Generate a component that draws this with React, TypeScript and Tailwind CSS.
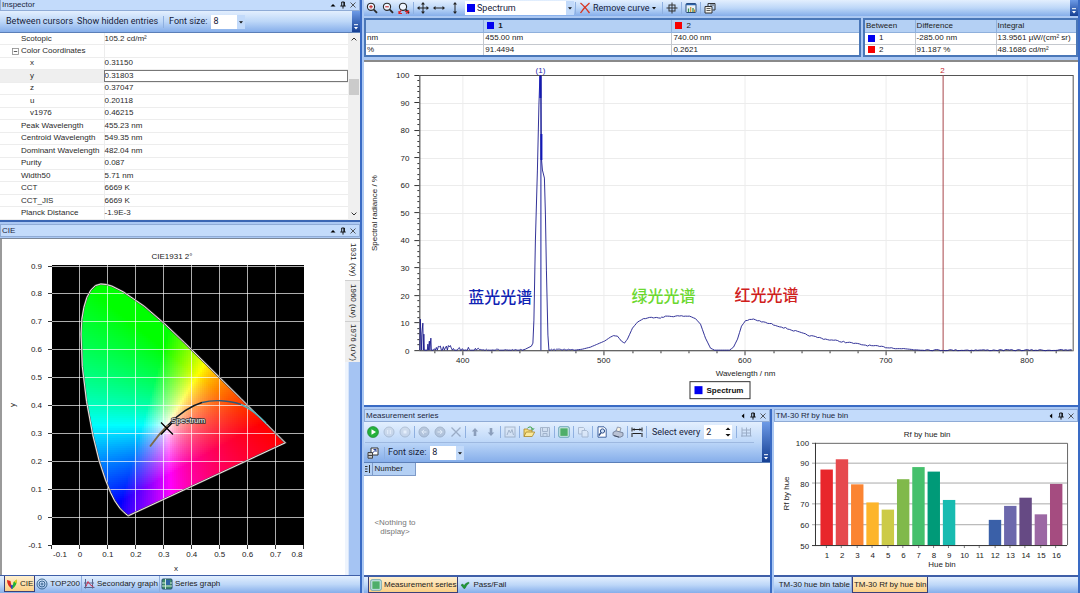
import React from 'react';
import type { ReactNode } from 'react';

/* ---------- shared pieces ---------- */

const TOOLBAR = 'bg-linear-to-b from-[#e3effe] via-[#bdd7f8] to-[#86aeea]';
const UI_TEXT = '[font-family:Roboto,sans-serif]';

function Sep() {
  return <span className="mx-px h-3 w-px shrink-0 bg-[#8fb0e0]" />;
}

function Overflow() {
  return (
    <button
      type="button"
      aria-label="Toolbar options"
      className="flex w-2 shrink-0 items-end justify-center self-stretch bg-linear-to-b from-[#6d9ae6] to-[#153f93] pb-0.5"
    >
      <svg viewBox="0 0 6 6" className="size-1.5">
        <path d="M1 .7h4" stroke="#fff" />
        <path d="M1 3h4L3 5.4z" fill="#fff" />
      </svg>
    </button>
  );
}

function PanelTitle({ title, arrow }: { title: string; arrow: 'up' | 'left' }) {
  return (
    <header className="flex h-[13px] shrink-0 items-center border border-[#8fabd6] bg-[#c3dbfb] pr-0.5 pl-px text-[8px] leading-none text-[#1c2740]">
      <h2 className="flex-1">{title}</h2>
      <div className="flex items-center gap-0.5">
        <button type="button" aria-label="Panel menu" className="size-2">
          <svg viewBox="0 0 8 8" className="size-2">
            {arrow === 'up' ? <path d="M1.5 5.6h5L4 3z" fill="#000" /> : <path d="M5.2 1.5v5L2.6 4z" fill="#000" />}
          </svg>
        </button>
        <button type="button" aria-label="Pin panel" className="size-2">
          <svg viewBox="0 0 8 8" className="size-2" fill="none" stroke="#000">
            <path d="M2.7 4.8V1h2.6v3.8M1.3 5h5.4M4 5v2.6" strokeWidth=".9" />
            <path d="M5 1v4" />
          </svg>
        </button>
        <button type="button" aria-label="Close panel" className="size-2">
          <svg viewBox="0 0 8 8" className="size-2" stroke="#333" strokeWidth=".8">
            <path d="M1.5 1.5l5 5M6.5 1.5l-5 5" />
          </svg>
        </button>
      </div>
    </header>
  );
}

function ComboArrow() {
  return (
    <span className="pointer-events-none flex w-2 shrink-0 items-center justify-center self-stretch bg-[#c2dafa]">
      <svg viewBox="0 0 6 6" className="size-1.5">
        <path d="M1 2.2h4L3 4.6z" fill="#111" />
      </svg>
    </span>
  );
}

function FontSize({ id }: { id: string }) {
  return (
    <div className="flex items-center gap-1">
      <label htmlFor={id}>Font size:</label>
      <div className="flex h-3.5 w-[34px] items-stretch bg-white">
        <select id={id} defaultValue="8" className="min-w-0 flex-1 appearance-none bg-white pl-0.5 outline-none">
          <option>8</option>
          <option>10</option>
        </select>
        <ComboArrow />
      </div>
    </div>
  );
}

function Tool({ label, children, disabled }: { label: string; children: ReactNode; disabled?: boolean }) {
  return (
    <button
      type="button"
      aria-label={label}
      disabled={disabled}
      className="flex h-4 w-4 shrink-0 items-center justify-center disabled:opacity-45"
    >
      <svg viewBox="0 0 12 12" className="size-3" fill="none">
        {children}
      </svg>
    </button>
  );
}

function Tab({ active, icon, children }: { active?: boolean; icon?: ReactNode; children: ReactNode }) {
  return (
    <button
      type="button"
      className={
        active
          ? 'flex h-4 items-center gap-0.5 border border-t-0 border-[#3b3f78] bg-linear-to-b from-[#fff0cf] to-[#fbcf85] px-px'
          : 'flex h-4 items-center gap-0.5 border-r border-[#8faede] px-px last:border-r-0'
      }
    >
      {icon && (
        <svg viewBox="0 0 12 12" className="size-3" fill="none">
          {icon}
        </svg>
      )}
      {children}
    </button>
  );
}

const GreenBox = (
  <>
    <rect x=".8" y=".8" width="10.4" height="10.4" rx="1.2" fill="#dff3ee" stroke="#5f9fb0" />
    <rect x="2.3" y="2.3" width="7.4" height="7.6" fill="#4fae6a" />
  </>
);

/* ---------- inspector ---------- */

const ROWS: [string, string, number][] = [
  ['Scotopic', '105.2 cd/m²', 0],
  ['Color Coordinates', '', 0],
  ['x', '0.31150', 1],
  ['y', '0.31803', 1],
  ['z', '0.37047', 1],
  ['u', '0.20118', 1],
  ['v1976', '0.46215', 1],
  ['Peak Wavelength', '455.23 nm', 0],
  ['Centroid Wavelength', '549.35 nm', 0],
  ['Dominant Wavelength', '482.04 nm', 0],
  ['Purity', '0.087', 0],
  ['Width50', '5.71 nm', 0],
  ['CCT', '6669 K', 0],
  ['CCT_JIS', '6669 K', 0],
  ['Planck Distance', '-1.9E-3', 0],
];

function Inspector() {
  return (
    <section className="flex flex-col border-b-2 border-[#3a66b4]">
      <PanelTitle title="Inspector" arrow="up" />
      <div className={`flex h-[21px] items-center ${TOOLBAR} ${UI_TEXT} text-[9px] leading-none text-[#16213a]`}>
        <div className="flex flex-1 items-center gap-1 pl-1.5">
          <button type="button">Between cursors</button>
          <button type="button">Show hidden entries</button>
          <Sep />
          <FontSize id="inspector-size" />
        </div>
        <Overflow />
      </div>
      <div className="flex border-t border-[#5b7fb8] bg-white">
        <table className="h-[187px] flex-1 border-collapse text-[8px] leading-none text-[#2a2a2a]">
          <tbody>
            {ROWS.map(([name, value, level]) => (
              <tr key={name} className="border-b border-[#ededed]">
                <th
                  scope="row"
                  className={
                    'w-[104px] border-r border-[#ededed] py-0 text-left font-normal whitespace-nowrap ' +
                    (name === 'y' ? 'bg-[#efefef] ' : '') +
                    (level ? 'pl-[30px]' : name === 'Color Coordinates' ? 'pl-3' : 'pl-[21px]')
                  }
                >
                  {name === 'Color Coordinates' ? (
                    <span className="flex items-center gap-0.5">
                      <svg viewBox="0 0 7 7" className="size-[7px]" fill="none">
                        <rect x=".5" y=".5" width="6" height="6" fill="#fff" stroke="#8a8a8a" strokeWidth=".8" />
                        <path d="M1.8 3.5h3.4" stroke="#333" strokeWidth=".8" />
                      </svg>
                      {name}
                    </span>
                  ) : (
                    name
                  )}
                </th>
                <td className={name === 'y' ? 'py-0 pl-0 outline-1 -outline-offset-1 outline-[#777]' : 'py-0 pl-0'}>
                  {value}
                </td>
              </tr>
            ))}
          </tbody>
        </table>
        <div className="flex w-[12px] flex-col items-center justify-between bg-[#f0f0f0] py-1">
          <svg viewBox="0 0 6 4" className="h-1 w-1.5" fill="none" stroke="#333">
            <path d="M.6 3.4L3 1l2.4 2.4" />
          </svg>
          <div className="mb-20 h-4 w-[10px] bg-[#cbcbcb]" />
          <svg viewBox="0 0 6 4" className="h-1 w-1.5" fill="none" stroke="#333">
            <path d="M.6 .6L3 3 5.4.6" />
          </svg>
        </div>
      </div>
    </section>
  );
}

/* ---------- CIE 1931 diagram ---------- */

const LOCUS: [number, number][] = [
  [0.1741, 0.005], [0.1733, 0.0048], [0.1714, 0.0051], [0.1689, 0.0069], [0.1644, 0.0109],
  [0.1566, 0.0177], [0.144, 0.0297], [0.1241, 0.0578], [0.1096, 0.0868], [0.0913, 0.1327],
  [0.0687, 0.2007], [0.0454, 0.295], [0.0235, 0.4127], [0.0082, 0.5384], [0.0039, 0.6548],
  [0.0065, 0.707], [0.0139, 0.7502], [0.0247, 0.786], [0.0389, 0.812], [0.055, 0.828],
  [0.0743, 0.8338], [0.094, 0.832], [0.1142, 0.8262], [0.1547, 0.8059], [0.2296, 0.7543],
  [0.3016, 0.6923], [0.3731, 0.6245], [0.4441, 0.5547], [0.5125, 0.4866], [0.5752, 0.4242],
  [0.627, 0.3725], [0.6658, 0.334], [0.6915, 0.3083], [0.719, 0.2809], [0.7347, 0.2653],
];

const cx = (x: number) => 80 + x * 279.5;
const cy = (y: number) => 517 - y * 279.5;

function xyToCss(x: number, y: number): string {
  const X = x / y;
  const Z = (1 - x - y) / y;
  const lin = [
    3.2406 * X - 1.5372 - 0.4986 * Z,
    -0.9689 * X + 1.8758 + 0.0415 * Z,
    0.0557 * X - 0.204 + 1.057 * Z,
  ].map((v) => Math.max(0, v));
  const top = Math.max(...lin);
  return `rgb(${lin.map((v) => Math.round(255 * Math.pow(v / top, 0.8))).join(',')})`;
}

function gamutCells() {
  const cells: { x: number; y: number; c: string }[] = [];
  for (let py = 282; py < 518; py += 2) {
    for (let px = 78; px < 288; px += 2) {
      const x = (px + 1 - 80) / 279.5;
      const y = Math.max(0.004, (517 - py - 1) / 279.5);
      if (x + y > 1.02 || y < (x - 0.2) * 0.44 - 0.02) continue;
      cells.push({ x: px, y: py, c: xyToCss(Math.max(x, 0.001), y) });
    }
  }
  return cells;
}

const CELLS = gamutCells();
const LOCUS_POINTS = LOCUS.map(([x, y]) => `${cx(x).toFixed(1)},${cy(y).toFixed(1)}`).join(' ');

function CieChart() {
  const xs = [0, 1, 2, 3, 4, 5, 6, 7, 8, 9];
  const ys = [0, 1, 2, 3, 4, 5, 6, 7, 8, 9, 10];
  return (
    <svg viewBox="2 239 343 336" className="h-full w-full" role="img" aria-label="CIE1931 2° diagram">
      <defs>
        <clipPath id="gamut">
          <polygon points={LOCUS_POINTS} />
        </clipPath>
      </defs>
      <rect x="52" y="265" width="252" height="280" fill="#000" />
      <g clipPath="url(#gamut)" shapeRendering="crispEdges">
        {CELLS.map((c) => (
          <rect key={`${c.x}-${c.y}`} x={c.x} y={c.y} width="2" height="2" fill={c.c} />
        ))}
      </g>
      <g stroke="#fff" strokeOpacity=".68">
        {xs.slice(1, 9).map((i) => (
          <path key={i} d={`M${Math.round(52 + i * 27.95) - 0.5} 265V545`} />
        ))}
        {ys.slice(1, 11).map((i) => (
          <path key={i} d={`M52 ${Math.round(545 - i * 27.95) + 0.5}H304`} />
        ))}
      </g>
      <polygon points={LOCUS_POINTS} fill="none" stroke="#555" strokeWidth="1.8" />
      <polygon points={LOCUS_POINTS} fill="none" stroke="#f1e8e4" strokeWidth="1" />
      <g stroke="#333">
        {xs.map((i) => (
          <path key={i} d={`M${Math.round(52 + i * 27.95) - 0.5} 545v4`} />
        ))}
        {ys.map((i) => (
          <path key={i} d={`M48 ${Math.round(545 - i * 27.95) + 0.5}h4`} />
        ))}
      </g>
      <g fill="none" strokeWidth="1.4">
        <path d="M150 446.500C156 438 161 432 168 425" stroke="#7c6a4a" strokeWidth="1.800" />
        <path d="M168 425C178 415 190 406 202 402.500" stroke="#101820" />
        <path d="M202 402.500C213 399.500 229 400 241 404.500" stroke="#2f5a78" />
        <path d="M241 404.500C251 408.500 259 416 266 423" stroke="#57b4bd" />
      </g>
      <path d="M161 422.500l12 12M172.500 422.500L161 434.500" stroke="#000" strokeWidth="1.300" />
      <g fontSize="8" fill="#222">
        <text x="171" y="423" fill="#fff" stroke="#333" strokeWidth="1.600" paintOrder="stroke">
          Spectrum
        </text>
        <text x="172" y="259" textAnchor="middle">CIE1931 2°</text>
        {ys.map((i) => (
          <text key={i} x="42" y={548 - i * 27.95} textAnchor="end">
            {i === 1 ? '0' : ((i - 1) / 10).toFixed(1)}
          </text>
        ))}
        {xs.map((i) => (
          <text key={i} x={i === 0 ? 60 : i === 9 ? 297 : 52 + i * 27.95} y="557" textAnchor="middle">
            {i === 1 ? '0' : ((i - 1) / 10).toFixed(1)}
          </text>
        ))}
        <text x="176" y="571" textAnchor="middle">x</text>
        <text transform="translate(15 405) rotate(-90)" textAnchor="middle">y</text>
      </g>
    </svg>
  );
}

function CiePanel() {
  const side = ['1931 (xy)', '1960 (uv)', "1976 (u'v')"];
  return (
    <section className="mt-0.5 flex min-h-0 flex-1 flex-col">
      <PanelTitle title="CIE" arrow="up" />
      <div className="mt-px flex min-h-0 flex-1 border-t border-[#7b8798]">
        <div className="min-h-0 min-w-0 flex-1 border-l-2 border-[#9a9a9a] bg-white">
          <CieChart />
        </div>
        <div className="flex w-[15px] flex-col bg-linear-to-r from-[#eef4fd] from-20% to-[#a5c4f3] to-30% text-[8px] leading-none">
          {side.map((s, i) => (
            <button
              key={s}
              type="button"
              className={
                'flex h-[41px] items-center justify-center [writing-mode:vertical-rl] ' +
                (i === 0 ? 'bg-white' : 'border-t border-[#cfcfcf] bg-[#eeeeee]')
              }
            >
              {s}
            </button>
          ))}
        </div>
      </div>
      <nav className={`flex h-[18px] items-start border-t border-[#3f5fa8] pl-1 ${TOOLBAR} text-[8px] leading-none`}>
        <Tab
          active
          icon={
            <>
              <path d="M1 2l3.500 1L6 11C3 9 1 6 1 2z" fill="#e02a1c" />
              <path d="M4.300 6L6 7.500l1.800-1.500L6.500 11H5.500z" fill="#2438d8" />
              <path d="M7.500 4L11 1.500c0 4-1.500 7.500-5 9.500z" fill="#26b534" />
              <path d="M8 3.500l3-2-.5 4z" fill="#f2d21c" />
            </>
          }
        >
          CIE
        </Tab>
        <Tab
          icon={
            <g stroke="#3b6690">
              <circle cx="6" cy="6" r="5" />
              <circle cx="6" cy="6" r="3" />
              <circle cx="6" cy="6" r="1" />
            </g>
          }
        >
          TOP200
        </Tab>
        <Tab
          icon={
            <>
              <path d="M2.500 1v9.500M1 9.500h10.500M9.500 1v9.500M1 5h10" stroke="#5a668c" />
              <path d="M3 8.500l2-5 2 3 3.500 2.500" stroke="#d02f4d" />
            </>
          }
        >
          Secondary graph
        </Tab>
        <Tab
          icon={
            <>
              <rect x="1" y="1" width="10" height="10" rx="1" fill="#3f8d68" stroke="#26506e" />
              <path d="M4.500 1v10M1 5h10M1 8h10" stroke="#cde9dd" />
              <rect x="5" y="2" width="4" height="5" fill="#2f66a5" />
            </>
          }
        >
          Series graph
        </Tab>
      </nav>
    </section>
  );
}

/* ---------- main spectrum ---------- */

const wx = (nm: number) => 463.3 + (nm - 400) * 1.41;
const vy = (v: number) => 350.5 - v * 2.755;

function spectrumPath(): string {
  const out: string[] = [];
  let seed = 7;
  const rnd = () => {
    seed = (seed * 16807) % 2147483647;
    return seed / 2147483647;
  };
  const put = (x: number, y: number) => out.push(`${out.length ? 'L' : 'M'}${x.toFixed(1)} ${y.toFixed(1)}`);
  [
    [420.5, 350], [421, 319], [422, 350], [422.5, 334], [423.5, 323], [424, 350], [424.5, 334], [425, 350],
    [428, 350], [428.5, 344], [429, 350], [430, 341], [430.5, 350], [431.5, 338], [432, 350],
  ].forEach(([x, y]) => put(x, y));
  for (let x = 434; x < 524; x += 1) {
    const amp = x < 458 ? 5 : x < 480 ? 3 : 1;
    put(x, 350 - (rnd() > 0.5 ? rnd() * amp : 0));
  }
  [
    [526, 349], [532, 346], [533.5, 343], [534.5, 320], [536, 240], [538, 170], [539.5, 105], [540.5, 75.5],
    [541.5, 76], [542, 158], [543, 170], [545, 178], [546, 214], [547, 270], [548.5, 335], [549.5, 350],
  ].forEach(([x, y]) => put(x, y));
  for (let x = 551; x < 575; x += 1) put(x, 350 - rnd());
  const broad: [number, number][] = [
    [575, 350], [583, 349], [591, 347], [598, 344], [605, 341], [611, 337], [614, 335.5], [618, 336], [622, 341],
    [625, 343], [628, 339], [633, 328], [638, 322], [644, 318.5], [655, 317], [662, 317.5], [668, 316], [680, 316],
    [690, 316], [696, 318.5], [701, 324], [706, 338], [711, 348], [715, 350], [730, 350], [734, 347], [738, 339],
    [742, 326], [746, 320.5], [752, 319], [758, 320.5], [766, 322.5], [776, 325], [786, 328], [796, 331],
    [808, 335], [826, 339], [846, 342], [866, 345], [890, 347.5], [915, 349.5], [942, 350], [1073, 350],
  ];
  for (let i = 1; i < broad.length; i++) {
    const [x0, y0] = broad[i - 1];
    const [x1, y1] = broad[i];
    for (let x = x0; x < x1; x += 2) {
      const t = (x - x0) / (x1 - x0);
      const rough = (x > 644 && x < 692) || x > 746;
      const y = y0 + (y1 - y0) * t + (rough ? (rnd() - 0.5) * 1.3 : 0);
      put(x, Math.min(y, 350.5));
    }
  }
  return out.join('');
}

const SPECTRUM = spectrumPath();

function SpectrumChart() {
  const tens = [0, 10, 20, 30, 40, 50, 60, 70, 80, 90, 100];
  const minorY = Array.from({ length: 51 }, (_, i) => i * 2);
  const minorX = Array.from({ length: 23 }, (_, i) => 380 + i * 20);
  const majors = [400, 500, 600, 700, 800];
  return (
    <svg viewBox="365 62 713 343" className="h-full w-full" role="img" aria-label="Spectral radiance chart">
      <g stroke="#ececec">
        {tens.slice(1, 10).map((v) => (
          <path key={v} d={`M420 ${Math.round(vy(v)) + 0.5}H1073`} />
        ))}
        {majors.map((n) => (
          <path key={n} d={`M${Math.round(wx(n)) + 0.5} 75V350`} />
        ))}
      </g>
      <g stroke="#333" fill="none">
        <path d="M420.500 75.500V350.500H1073" />
        <path d="M420 75.500H1073.500V351" stroke="#555" />
        {minorY.map((v) => (
          <path key={v} d={`M${v % 10 ? 418 : 415} ${Math.round(vy(v) - 0.5) + 0.5}H420`} />
        ))}
        {minorX.map((n) => (
          <path key={n} d={`M${Math.round(wx(n)) + 0.5} 351v${n % 100 ? 2 : 4}`} />
        ))}
      </g>
      <path d={SPECTRUM} fill="none" stroke="#1c1c8c" strokeWidth=".9" strokeLinejoin="round" />
      <path d="M541 76V98M542 134V160" stroke="#1016c8" strokeWidth="2" />
      <path d="M541.500 75V350" stroke="#1a1f9c" />
      <path d="M943.500 75V350" stroke="#a8464a" />
      <g fontSize="8" fill="#222">
        {tens.map((v) => (
          <text key={v} x="410" y={vy(v) + 3} textAnchor="end">{v}</text>
        ))}
        {majors.map((n) => (
          <text key={n} x={wx(n)} y="363" textAnchor="middle">{n}</text>
        ))}
        <text x="746" y="376" textAnchor="middle">Wavelength / nm</text>
        <text transform="translate(378 213) rotate(-90)" textAnchor="middle">Spectral radiance / %</text>
        <text x="541" y="73" textAnchor="middle" fill="#1f2bb0">(1)</text>
        <text x="943" y="73" textAnchor="middle" fill="#c3252b">2</text>
      </g>
      <g fontSize="16" fontWeight="500">
        <text x="469" y="302.500" fill="#0f23b4">蓝光光谱</text>
        <text x="632" y="302" fill="#6bd82f">绿光光谱</text>
        <text x="735" y="301" fill="#d0201c">红光光谱</text>
      </g>
      <rect x="690.500" y="381.500" width="60" height="17" fill="#fff" stroke="#333" />
      <rect x="695" y="386" width="8" height="8" fill="#0000f0" />
      <text x="707" y="393" fontSize="8" fontWeight="700" fill="#111">Spectrum</text>
    </svg>
  );
}

function MainToolbar() {
  const lens = (
    <>
      <circle cx="5" cy="4.800" r="3.600" fill="#eef5ff" stroke="#2a2a2a" strokeWidth="1.100" />
      <path d="M7.800 7.600l3.200 3.200" stroke="#2a2a2a" strokeWidth="1.900" />
    </>
  );
  return (
    <div className={`flex h-4 items-center ${TOOLBAR} ${UI_TEXT} text-[9px] leading-none text-[#16213a]`}>
      <Tool label="Zoom in">
        {lens}
        <path d="M3.200 4.800h3.600M5 3v3.600" stroke="#c01818" />
      </Tool>
      <Tool label="Zoom out">
        {lens}
        <path d="M3.200 4.800h3.600" stroke="#c01818" />
      </Tool>
      <Tool label="Reset zoom">
        {lens}
        <path d="M1 11.500l2.500-3.500M1 9v2.500h3M7 9l4 2.500M11 8.500l-3 3" stroke="#e02020" strokeWidth="1.200" />
      </Tool>
      <Sep />
      <Tool label="Pan">
        <path d="M6 1.500v9M1.500 6h9" stroke="#222" />
        <path d="M6 0l2 2.500H4zM6 12l2-2.500H4zM0 6l2.500-2v4zM12 6L9.500 4v4z" fill="#222" />
      </Tool>
      <Tool label="Pan horizontally">
        <path d="M1.500 6h9" stroke="#222" />
        <path d="M0 6l2.500-2v4zM12 6L9.500 4v4z" fill="#222" />
      </Tool>
      <Tool label="Pan vertically">
        <path d="M6 1.500v9" stroke="#222" />
        <path d="M6 0l2 2.500H4zM6 12l2-2.500H4z" fill="#222" />
      </Tool>
      <div className="ml-0.5 flex h-3.5 w-[109px] items-center gap-0.5 bg-white pl-0.5">
        <span className="size-2 bg-[#0000f0]" />
        <select aria-label="Curve" className="min-w-0 flex-1 appearance-none bg-white outline-none">
          <option>Spectrum</option>
        </select>
        <ComboArrow />
      </div>
      <Sep />
      <button type="button" className="flex items-center gap-0.5 pl-0.5">
        <svg viewBox="0 0 12 12" className="size-3" fill="none">
          <path d="M1.500 1c3 2.500 6 6 9 10M10.500 1C7 4 4 7 1.500 11" stroke="#d8351f" strokeWidth="1.300" />
        </svg>
        Remove curve
        <svg viewBox="0 0 6 6" className="size-1.5">
          <path d="M1 2h4L3 4.500z" fill="#111" />
        </svg>
      </button>
      <span className="w-1" />
      <Sep />
      <Tool label="Crosshair">
        <rect x="3" y="3" width="6" height="6" stroke="#333" />
        <path d="M6 .5v11M.5 6h11" stroke="#333" />
      </Tool>
      <Sep />
      <Tool label="Chart options">
        <rect x="1" y="1.500" width="10" height="9" rx="1" fill="#e8f2fb" stroke="#2b4a78" />
        <path d="M1 2.500h10" stroke="#2b62a8" strokeWidth="1.500" />
        <path d="M3.500 10V6.500M8 10V6" stroke="#3a9050" strokeWidth="1.300" />
        <path d="M5.700 10V5M9.500 10V7.500" stroke="#d09030" strokeWidth="1.200" />
      </Tool>
      <Sep />
      <Tool label="Properties">
        <path d="M1 4.500h7v6.500H1z" fill="#f3f3ee" stroke="#333" />
        <path d="M4 4V1.500h7V8H8.500" stroke="#333" />
        <path d="M6 3h4M2.500 6.500h4M2.500 8.500h4" stroke="#333" strokeWidth=".8" />
      </Tool>
      <span className="flex-1" />
      <Overflow />
    </div>
  );
}

function Marked({ red, children }: { red?: boolean; children: ReactNode }) {
  return (
    <span className="flex items-center gap-1 pl-0.5">
      <span className={red ? 'size-[7px] bg-[#f80000]' : 'size-[7px] bg-[#0000f0]'} />
      {children}
    </span>
  );
}

function CursorTables() {
  const frame = 'border-collapse border-2 border-[#4a77b8] bg-white text-left text-[8px] leading-none text-[#222]';
  const cell = 'h-3 border border-[#c4c8ce] px-px py-0 font-normal whitespace-nowrap';
  const head = 'h-[13px] border-r border-b border-[#8fb0dc] bg-[#b4d0f4] px-px py-0 font-normal whitespace-nowrap';
  return (
    <div className="mt-0.5 flex gap-0.5">
      <div className="min-w-0 flex-1">
        <table className={`w-full table-fixed ${frame}`}>
          <thead>
            <tr>
              <th className={`w-[24%] ${head}`} aria-label="Unit" />
              <th className={`w-[38%] ${head}`}>
                <Marked><b>1</b></Marked>
              </th>
              <th className={head}>
                <Marked red>2</Marked>
              </th>
            </tr>
          </thead>
          <tbody>
            <tr><th className={cell}>nm</th><td className={cell}>455.00 nm</td><td className={cell}>740.00 nm</td></tr>
            <tr><th className={cell}>%</th><td className={cell}>91.4494</td><td className={cell}>0.2621</td></tr>
          </tbody>
        </table>
      </div>
      <div className="w-[215px]">
        <table className={`w-full table-fixed ${frame}`}>
          <thead>
            <tr>
              <th className={`w-[24%] ${head}`}>Between</th>
              <th className={`w-[38%] ${head}`}>Difference</th>
              <th className={head}>Integral</th>
            </tr>
          </thead>
          <tbody>
            <tr>
              <th className={cell}><Marked>1</Marked></th>
              <td className={cell}>-285.00 nm</td>
              <td className={cell}>13.9561 µW/(cm² sr)</td>
            </tr>
            <tr>
              <th className={cell}><Marked red>2</Marked></th>
              <td className={cell}>91.187 %</td>
              <td className={cell}>48.1686 cd/m²</td>
            </tr>
          </tbody>
        </table>
      </div>
    </div>
  );
}

/* ---------- measurement series ---------- */

function MeasurementSeries() {
  return (
    <section className="flex min-h-0 min-w-0 flex-[4] flex-col border-r-2 border-[#3a6bc4]">
      <PanelTitle title="Measurement series" arrow="left" />
      <div className={`flex h-[41px] shrink-0 border-b border-[#5b7fb8] ${TOOLBAR} ${UI_TEXT} text-[9px] leading-none text-[#16213a]`}>
        <div className="min-w-0 flex-1 pr-2 pl-px">
          <div className="flex h-[21px] items-center border-b border-[#9db8e0]">
            <Tool label="Start">
              <circle cx="6" cy="6" r="5.500" fill="#25b23c" stroke="#17802a" strokeWidth=".6" />
              <path d="M4.500 3.200v5.600L9 6z" fill="#fff" />
            </Tool>
            <Tool label="Pause" disabled>
              <circle cx="6" cy="6" r="5" fill="#c3ccda" stroke="#8594aa" />
              <path d="M4.700 4v4M7.300 4v4" stroke="#fff" />
            </Tool>
            <Tool label="Stop" disabled>
              <circle cx="6" cy="6" r="5" fill="#c3ccda" stroke="#8594aa" />
              <path d="M4.500 4.500h3v3h-3z" fill="#fff" />
            </Tool>
            <Sep />
            <Tool label="Previous" disabled>
              <circle cx="6" cy="6" r="5" fill="#94a3b8" stroke="#6c7c94" />
              <path d="M8.500 6H4M6 3.800L3.800 6 6 8.200" stroke="#fff" />
            </Tool>
            <Tool label="Next" disabled>
              <circle cx="6" cy="6" r="5" fill="#94a3b8" stroke="#6c7c94" />
              <path d="M3.500 6H8M6 3.800L8.200 6 6 8.200" stroke="#fff" />
            </Tool>
            <Tool label="Delete" disabled>
              <path d="M1.500 1.500l9 9M10.500 1.500l-9 9" stroke="#5d6d88" strokeWidth="1.300" />
            </Tool>
            <Sep />
            <Tool label="Move up" disabled>
              <path d="M6 2l3.200 3.500H7.300V10H4.700V5.500H2.800z" fill="#3d4f70" />
            </Tool>
            <Tool label="Move down" disabled>
              <path d="M6 10l3.200-3.500H7.300V2H4.700v4.500H2.800z" fill="#3d4f70" />
            </Tool>
            <Sep />
            <Tool label="Rename" disabled>
              <rect x="1" y="1" width="10" height="10" fill="#dce4ef" stroke="#6c7c94" />
              <path d="M3 9l2-5 1.500 3L8 3.500 9.500 9" stroke="#6c7c94" />
            </Tool>
            <Sep />
            <Tool label="Open">
              <path d="M1 10.500V3h3.500l1 1.200H9V6" fill="#f6dc7c" stroke="#a8862a" strokeWidth=".8" />
              <path d="M1 10.500L3.200 6h8.500l-2.500 4.500z" fill="#fbe99a" stroke="#a8862a" strokeWidth=".8" />
              <path d="M4.500 2.200C6.500.2 9 .8 9.500 3M8 2.500l1.600 1.500L11 2.300" stroke="#2d9a35" />
            </Tool>
            <Tool label="Save" disabled>
              <path d="M1.500 1.500h9v9h-9z" fill="#cdd7e4" stroke="#6c7c94" />
              <path d="M3.500 1.500v4h5v-4M4 10.500v-3h4v3" stroke="#6c7c94" />
            </Tool>
            <Sep />
            <Tool label="Show series">{GreenBox}</Tool>
            <Sep />
            <Tool label="Copy" disabled>
              <path d="M1.500 1.500h5l1 1V8h-6z" fill="#e9eef5" stroke="#7c8ba2" />
              <path d="M5 4.500h4.500L11 6v5H5z" fill="#e9eef5" stroke="#7c8ba2" />
            </Tool>
            <Sep />
            <Tool label="Print preview">
              <path d="M2 .8h6l2.200 2.200v8.200H2z" fill="#fff" stroke="#3f63a0" />
              <circle cx="6.500" cy="5" r="2.100" fill="#cfe2fa" stroke="#2f4f88" />
              <path d="M5 6.700L2.800 9.500" stroke="#2f4f88" strokeWidth="1.400" />
            </Tool>
            <Tool label="Print">
              <path d="M4 5l1.500-4 3.500 1-1.200 4" fill="#f7f2e2" stroke="#7d88a0" strokeWidth=".8" />
              <path d="M1 6.500L4 4.800l7 2v3l-3 1.500-7-2z" fill="#b9c2d4" stroke="#66728c" strokeWidth=".8" />
              <path d="M2 9.700l5 1.500" stroke="#3f4a60" />
            </Tool>
            <Sep />
            <Tool label="Fit range">
              <path d="M1 1.500v4M11 1.500v4M1.500 3.500h9M1 7v4M11 7v4M1.500 7.500h9" stroke="#222" />
              <path d="M1.500 3.500l2-1.500v3zM10.500 3.500l-2-1.500v3z" fill="#222" />
            </Tool>
            <Sep />
            <label htmlFor="every" className="px-1 whitespace-nowrap">Select every</label>
            <div className="flex h-3.5 w-[30px] bg-white">
              <input id="every" type="text" defaultValue="2" className="w-5 min-w-0 flex-1 bg-white pl-0.5 outline-none" />
              <svg viewBox="0 0 8 14" className="h-3.5 w-2">
                <path d="M1.500 5h5L4 2.500zM1.500 9h5L4 11.500z" fill="#111" />
              </svg>
            </div>
            <span className="w-1" />
            <Sep />
            <Tool label="Grid" disabled>
              <path d="M2 1.500v9M1 10h10.500M6.500 1.500V10M2 4h9M2 7h9M10.500 2v8" stroke="#5d6d88" />
            </Tool>
          </div>
          <div className="flex h-[19px] items-center gap-0.5">
            <Tool label="Export">
              <path d="M4 1h7v7H4z" fill="#fff" stroke="#333" />
              <path d="M5.500 6l3.500-3.500M6.500 2.500H9V5" stroke="#27409a" />
              <path d="M1 5.500h4.500v5.700H1zM1 8.500h4.500" fill="#c9c9c9" stroke="#444" />
            </Tool>
            <Sep />
            <FontSize id="series-size" />
          </div>
        </div>
        <Overflow />
      </div>
      <div className="min-h-0 flex-1 bg-white">
        <table className="w-[52px] border-collapse text-[8px] leading-none text-[#222]">
          <thead>
            <tr>
              <th className="h-3 w-2 border-r border-b border-[#7d9ac8] bg-[#b4d0f4] p-0" aria-label="Row marker">
                <svg viewBox="0 0 6 8" className="mx-auto h-2 w-1.5" stroke="#333">
                  <path d="M0 1.500h2.500M0 4h2.500M0 6.500h2.500M4.500 0v8" />
                </svg>
              </th>
              <th className="h-3 border-r border-b border-[#7d9ac8] bg-[#b4d0f4] py-0 pl-0.5 text-left font-normal">Number</th>
            </tr>
          </thead>
        </table>
        <p className="mt-[42px] ml-1.5 w-[50px] text-center text-[8px] leading-[9px] text-[#777]">&lt;Nothing to display&gt;</p>
      </div>
      <nav className={`flex h-[18px] shrink-0 items-start border-t-2 border-[#3f5fa8] pl-1 ${TOOLBAR} text-[8px] leading-none`}>
        <Tab active icon={GreenBox}>Measurement series</Tab>
        <Tab icon={<path d="M2 6l1.800-1 1.200 1.700C6 5 7.500 3.800 9.800 3.200l.2 1C8.200 5.600 7 7.200 6 9.400L4.800 9.400z" fill="#1f9a35" stroke="#136a22" strokeWidth=".5" />}>
          Pass/Fail
        </Tab>
      </nav>
    </section>
  );
}

/* ---------- TM-30 ---------- */

const BINS: { v: number; c: string }[] = [
  { v: 87, c: '#e8262b' }, { v: 92, c: '#e64a4e' }, { v: 79.8, c: '#fb8432' }, { v: 71, c: '#fdb52b' },
  { v: 67.5, c: '#cccb47' }, { v: 82.3, c: '#80b94b' }, { v: 88.2, c: '#45c06c' }, { v: 86, c: '#009a78' },
  { v: 72.2, c: '#18bbb0' }, { v: 50, c: '#2a9ac0' }, { v: 50, c: '#2a7ac0' }, { v: 62.5, c: '#3a60a8' },
  { v: 69.3, c: '#6c68ac' }, { v: 73.3, c: '#664a84' }, { v: 65.2, c: '#9c68a4' }, { v: 80, c: '#a54c80' },
];

function HueBinChart() {
  const ty = (v: number) => 546.5 - (v - 50) * 2.07;
  return (
    <svg viewBox="775 422 304 154" className="h-full w-full" role="img" aria-label="Rf by hue bin chart">
      <g stroke="#a9a9a9">
        {[60, 70, 80, 90].map((v) => (
          <path key={v} d={`M812 ${Math.round(ty(v)) - 0.5}H1069`} />
        ))}
      </g>
      <path d="M812 443.500H1069.500V546" fill="none" stroke="#666" />
      {BINS.map((b, i) => (
        <rect key={i} x={820.5 + i * 15.42} y={ty(b.v)} width="12.500" height={(b.v - 50) * 2.07} fill={b.c} />
      ))}
      <path d="M815.500 443V546.500H1069M812 546.500h4" fill="none" stroke="#333" />
      <g fontSize="8" fill="#222" textAnchor="middle">
        <text x="928" y="437">Rf by hue bin</text>
        {BINS.map((_, i) => (
          <React.Fragment key={i}>
            <path d={`M${Math.round(827 + i * 15.42) - 0.5} 547v2`} stroke="#777" />
            <text x={827 + i * 15.42} y="559.500">{i + 1}</text>
          </React.Fragment>
        ))}
        {[50, 60, 70, 80, 90, 100].map((v) => (
          <text key={v} x="809" y={ty(v) + 3} textAnchor="end">{v}</text>
        ))}
        <text x="943" y="568.500">Hue bin</text>
        <text transform="translate(789 494) rotate(-90)">Rf by hue</text>
      </g>
    </svg>
  );
}

function HueBinPanel() {
  return (
    <section className="ml-0.5 flex min-h-0 min-w-0 flex-[3] flex-col">
      <PanelTitle title="TM-30 Rf by hue bin" arrow="left" />
      <div className="min-h-0 flex-1 bg-white">
        <HueBinChart />
      </div>
      <nav className={`flex h-[18px] shrink-0 items-start border-t-2 border-[#3f5fa8] pl-1 ${TOOLBAR} text-[8px] leading-none`}>
        <Tab>TM-30 hue bin table</Tab>
        <Tab active>TM-30 Rf by hue bin</Tab>
      </nav>
    </section>
  );
}

export default function App() {
  return (
    <main className="flex h-screen min-h-[480px] overflow-hidden bg-[#abc8f3] text-[#1b1b1b] [font-family:'Liberation_Sans','Noto_Sans_CJK_SC',sans-serif]">
      <div className="-mt-0.5 flex w-1/3 min-w-[300px] flex-col">
        <Inspector />
        <CiePanel />
      </div>
      <div className="flex min-w-0 flex-1 flex-col border-x-2 border-[#3a6bc4] pl-0.5">
        <MainToolbar />
        <CursorTables />
        <div className="mt-[3px] min-h-0 flex-1 border-t-2 border-b-2 border-t-[#8a8a8a] border-b-[#3a6bc4] bg-white">
          <SpectrumChart />
        </div>
        <div className="mt-0.5 flex h-[31%] min-h-0 shrink-0">
          <MeasurementSeries />
          <HueBinPanel />
        </div>
      </div>
    </main>
  );
}
